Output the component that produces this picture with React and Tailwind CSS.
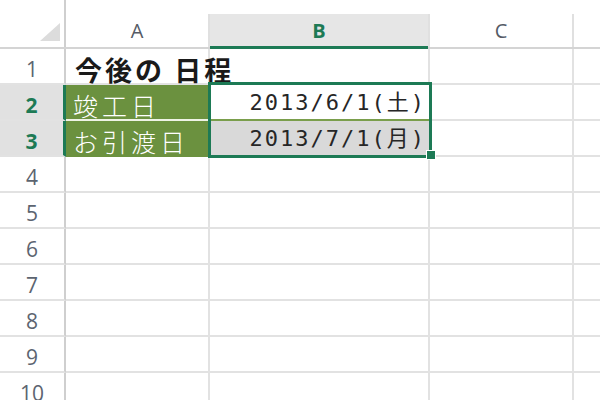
import React from "react";

const rows = [1, 2, 3, 4, 5, 6, 7, 8, 9, 10];

function RowHeader({ n }) {
  const sel = n === 2 || n === 3;
  return (
    <div
      className={
        "w-[66px] h-[36px] shrink-0 border-b-2 border-b-[#e2e2e2] flex items-end justify-center pb-[3px] text-[21px] leading-none " +
        (sel
          ? "bg-[#e1e1e1] text-[#1d7a55] font-bold border-r-[3px] border-r-[#1d7a55]"
          : "bg-white text-[#5c6470] border-r-2 border-r-[#cfcfcf]")
      }
      style={{ fontFamily: '"Open Sans", "Liberation Sans", sans-serif' }}
    >
      {n}
    </div>
  );
}

export default function App() {
  const cjk = '"Noto Sans CJK JP", sans-serif';
  const mono = '"DejaVu Sans Mono", "Noto Sans CJK JP", monospace';
  return (
    <div className="w-[600px] h-[400px] overflow-hidden bg-white relative">
      <div className="h-[14px] flex">
        <div className="w-[66px] shrink-0 border-r-2 border-r-[#cfcfcf]" />
      </div>
      {/* column header */}
      <div className="flex h-[35px] border-b-2 border-b-[#d4d4d4]" style={{ fontFamily: '"Open Sans", "Liberation Sans", sans-serif' }}>
        <div className="w-[66px] shrink-0 border-r-2 border-r-[#cfcfcf] relative">
          <svg className="absolute left-[39px] top-[8px]" width="22" height="20" viewBox="0 0 22 20">
            <polygon points="1,19 21,19 21,1" fill="#dcdcdc" />
          </svg>
        </div>
        <div className="w-[144px] shrink-0 border-r-2 border-r-[#e0e0e0] flex items-center justify-center text-[20px] text-[#555b66]">A</div>
        <div className="w-[220px] shrink-0 border-r-2 border-r-[#e0e0e0] bg-[#e6e6e6] flex items-center justify-center text-[20px] font-bold text-[#1d7a55] relative">
          B
          <div className="absolute left-0 right-0 bottom-[-2px] h-[3px] bg-[#1d7a55]" />
        </div>
        <div className="w-[144px] shrink-0 border-r-2 border-r-[#e0e0e0] flex items-center justify-center text-[20px] text-[#555b66]">C</div>
        <div className="flex-1" />
      </div>
      {rows.map((n) => (
        <div key={n} className="flex">
          <RowHeader n={n} />
          {/* Column A */}
          {n === 1 ? (
            <div
              className="w-[144px] shrink-0 h-[36px] border-b-2 border-b-[#e2e2e2] border-r-2 border-r-[#e2e2e2] relative"
            >
              <div
                className="absolute left-[9px] bottom-[0px] whitespace-nowrap text-[27px] font-bold text-[#1a1a1a] tracking-[3px] leading-none"
                style={{ fontFamily: cjk }}
              >
                今後の 日程
              </div>
            </div>
          ) : n === 2 || n === 3 ? (
            <div
              className={
                "w-[144px] shrink-0 h-[36px] bg-[#6b913f] flex items-end pl-[7px] pb-[1px] text-white text-[25px] font-light tracking-[4px] leading-none whitespace-nowrap " +
                (n === 2 ? "border-b-2 border-b-[#eef3e6]" : "border-b-2 border-b-[#6b913f]")
              }
              style={{ fontFamily: cjk }}
            >
              {n === 2 ? "竣工日" : "お引渡日"}
            </div>
          ) : (
            <div className="w-[144px] shrink-0 h-[36px] border-b-2 border-b-[#e2e2e2] border-r-2 border-r-[#e2e2e2]" />
          )}
          {/* Column B */}
          {n === 2 || n === 3 ? (
            <div
              className={
                "w-[220px] shrink-0 h-[36px] flex items-end justify-end pr-[4px] pb-[5px] text-[22px] text-[#262626] leading-none whitespace-nowrap tracking-[2px] " +
                (n === 2 ? "bg-white border-b-2 border-b-[#7a9e4c]" : "bg-[#d9d9d9] border-b-2 border-b-[#e2e2e2]")
              }
              style={{ fontFamily: mono }}
            >
              {n === 2 ? "2013/6/1(土)" : "2013/7/1(月)"}
            </div>
          ) : (
            <div className="w-[220px] shrink-0 h-[36px] border-b-2 border-b-[#e2e2e2] border-r-2 border-r-[#e2e2e2]" />
          )}
          {/* Column C */}
          <div className="w-[144px] shrink-0 h-[36px] border-b-2 border-b-[#e2e2e2] border-r-2 border-r-[#e2e2e2]" />
          <div className="flex-1 h-[36px] border-b-2 border-b-[#e2e2e2]" />
        </div>
      ))}
      {/* selection overlay */}
      <div className="absolute left-[208px] top-[82px] w-[224px] h-[76px] border-[3px] border-[#1d7a55] pointer-events-none" />
      <div className="absolute left-[426px] top-[150px] w-[10px] h-[10px] bg-[#1d7a55] border border-white" />
    </div>
  );
}
